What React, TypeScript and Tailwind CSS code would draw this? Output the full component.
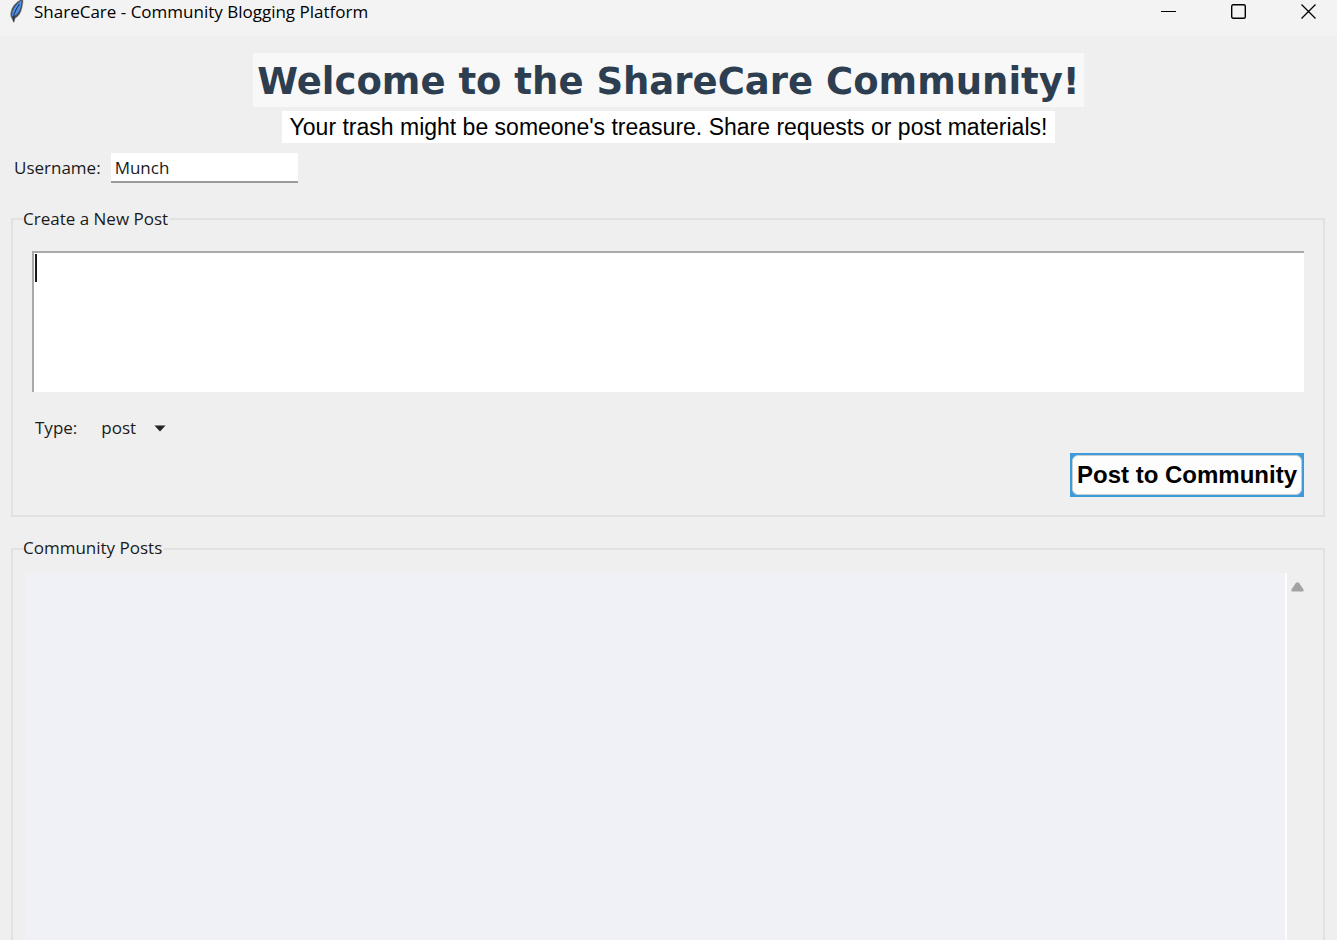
import * as React from "react";
import { useState } from "react";

const FeatherIcon = () => (
  <svg width="16" height="24" viewBox="0 0 16 24" aria-hidden="true">
    <path
      d="M14.800 -1C10.400 0.200 5 4.600 3.200 10.400 2.200 13.600 2.400 16.400 3.600 18.200L5.800 22.400 7 18.400C10.600 16.600 12.800 13 13.800 9 14.400 5.800 15.600 2.600 14.800 -1Z"
      fill="#44474c"
      stroke="#b5b0aa"
      strokeWidth="0.6"
    />
    <path d="M13.600 0.400C9.800 2.400 5.800 7 4.400 11.800L4 16.400 8 15C10.800 12.400 12.400 9 13 5.400Z" fill="#4b93e8" />
    <path d="M11.400 4 8.400 9 6 14.400 5.800 21.800" fill="none" stroke="#1b2c48" strokeWidth="1" />
  </svg>
);

const App = () => {
  const [username, setUsername] = useState("Munch");
  const [content, setContent] = useState("");
  const [type, setType] = useState("post");
  const [posts, setPosts] = useState<any[]>([]);

  const handlePost = (e: any) => {
    e.preventDefault();
    if (content.trim() === "") {
      return;
    }
    setPosts([{ username, content, type }, ...posts]);
    setContent("");
  };

  return (
    <div className="min-h-screen flex flex-col bg-[#efefef] text-[#1a1a1a] font-['Open_Sans',sans-serif] text-[17px] leading-6">
      {/* title bar */}
      <header className="h-9 flex items-start justify-between bg-[#f3f3f3] pl-2 pr-5 text-black">
        <div className="flex items-start gap-2.5">
          <FeatherIcon />
          <span>ShareCare - Community Blogging Platform</span>
        </div>
        <div className="flex gap-[54px] pt-1">
          <button type="button" aria-label="Minimize">
            <svg width="16" height="16" viewBox="0 0 16 16">
              <path d="M0 7.500h15" stroke="#000" />
            </svg>
          </button>
          <button type="button" aria-label="Maximize">
            <svg width="16" height="16" viewBox="0 0 16 16">
              <rect x="0.700" y="0.700" width="13.600" height="13.600" rx="1.500" fill="none" stroke="#000" strokeWidth="1.400" />
            </svg>
          </button>
          <button type="button" aria-label="Close">
            <svg width="16" height="16" viewBox="0 0 16 16">
              <path d="M0.500 0.500l14 14M14.500 0.500l-14 14" stroke="#000" strokeWidth="1.300" />
            </svg>
          </button>
        </div>
      </header>

      {/* heading */}
      <div className="flex flex-col items-center gap-1 pt-[17px] font-['Liberation_Sans',sans-serif]">
        <h1 className="bg-[#f8f8f8] px-1 pt-1 text-[37px] leading-[50px] font-bold text-[#2c3e50] font-['DejaVu_Sans',sans-serif]">
          Welcome to the ShareCare Community!
        </h1>
        <p className="bg-white px-2 text-[23px] leading-8 text-black">
          Your trash might be someone's treasure. Share requests or post materials!
        </p>
      </div>

      <form onSubmit={handlePost} className="pl-[11px] pr-3 pt-2.5">
        {/* username */}
        <div className="flex items-center gap-2.5 pl-[3px]">
          <label htmlFor="username">Username:</label>
          <input
            id="username"
            type="text"
            className="w-[187px] h-[30px] bg-white border-b-2 border-[#9a9a9a] px-1 outline-none"
            value={username}
            onChange={(e) => setUsername(e.target.value)}
          />
        </div>

        {/* new post */}
        <fieldset className="mt-6 border-2 border-[#e1e1e1] px-[19px] pb-[18px]">
          <legend className="-ml-[9px] pr-0.5">Create a New Post</legend>
          <div className="relative mt-5">
            <textarea
              aria-label="Post content"
              className={
                "block w-full h-[141px] resize-none bg-white border-t-2 border-l-2 border-[#a9a9a9] px-1 outline-none " +
                (content === "" ? "caret-transparent" : "caret-black")
              }
              value={content}
              onChange={(e) => setContent(e.target.value)}
            />
            {content === "" && (
              <span className="absolute left-[3px] top-[3px] w-0.5 h-7 bg-[#1a1a1a] pointer-events-none" />
            )}
          </div>
          <div className="flex items-center gap-6 mt-6 pl-[3px]">
            <label htmlFor="type">Type:</label>
            <div className="relative flex items-center">
              <select
                id="type"
                className="appearance-none bg-transparent w-[68px] outline-none"
                value={type}
                onChange={(e) => setType(e.target.value)}
              >
                <option value="post">post</option>
                <option value="request">request</option>
              </select>
              <svg className="absolute right-[3px] pointer-events-none" width="12" height="7" viewBox="0 0 12 7">
                <path d="M0.500 0.500h11L6 6.500Z" fill="#222" />
              </svg>
            </div>
          </div>
          <div className="flex justify-end mt-[13px]">
            <button type="submit" className="bg-[#3d9bdc] p-0.5">
              <span className="block rounded-md border border-[#c8cdd2] bg-[#fdfdfd] px-1 text-[24px] leading-[38px] font-bold text-black font-['Liberation_Sans',sans-serif]">
                Post to Community
              </span>
            </button>
          </div>
        </fieldset>
      </form>

      {/* posts list */}
      <section className="flex-1 flex flex-col ml-[11px] mr-3 mt-[31px] border-2 border-b-0 border-[#e1e1e1] pl-[13px] pr-[19px]">
        <h2 className="self-start -mt-3.5 -ml-[3px] pr-0.5 bg-[#efefef]">Community Posts</h2>
        <div className="flex-1 flex mt-[13px]">
          <div className="flex-1 bg-[#f0f1f6] border-r-2 border-[#fcfcfc]">
            {posts.map((item, index) => (
              <div key={index} className="px-3 py-2">
                <b>{item.username}</b> ({item.type}): {item.content}
              </div>
            ))}
          </div>
          <button type="button" aria-label="Scroll up" className="self-start pt-[9px] pl-1">
            <svg className="block" width="13" height="10" viewBox="0 0 13 10">
              <path d="M5 0.800Q6.500 -0.400 8 0.800L12.500 7.500Q13.200 9.500 11.500 9.500H1.500Q-0.200 9.500 0.500 7.500Z" fill="#a3a3a3" />
            </svg>
          </button>
        </div>
      </section>
    </div>
  );
};

export default App;
